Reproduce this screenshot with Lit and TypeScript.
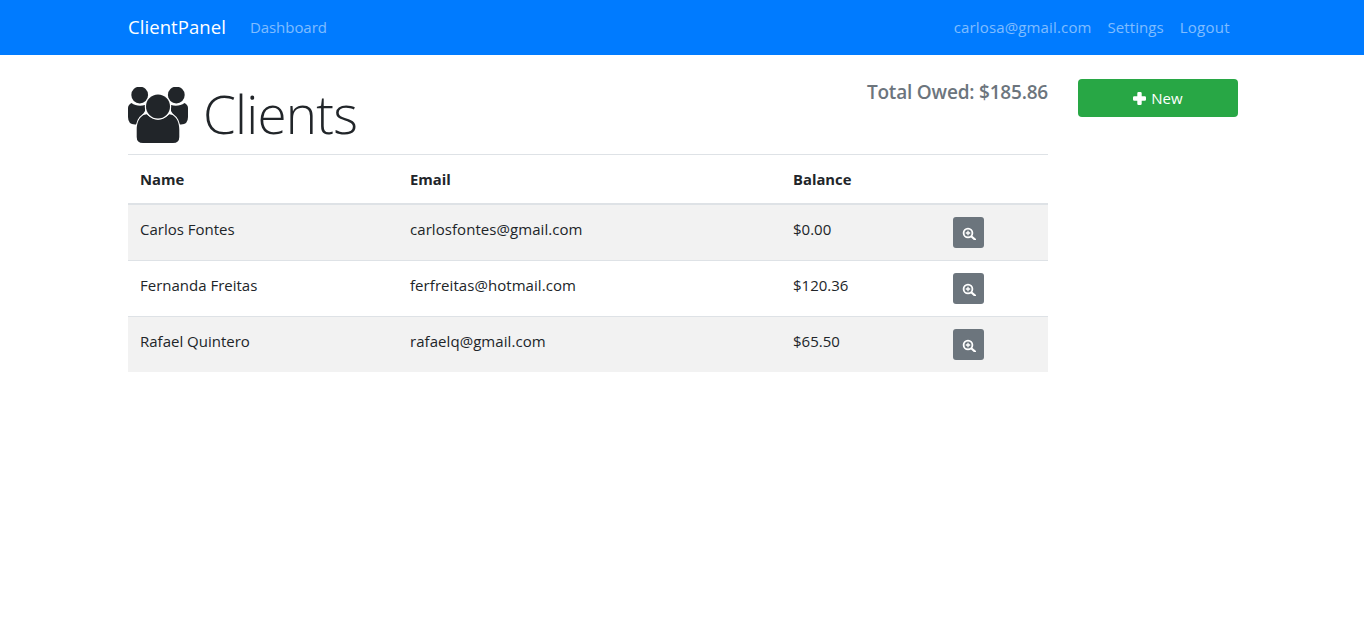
import { LitElement, html, css } from "lit";
import { customElement } from "lit/decorators.js";

const clients = [
  ["Carlos Fontes", "carlosfontes@gmail.com", "$0.00"],
  ["Fernanda Freitas", "ferfreitas@hotmail.com", "$120.36"],
  ["Rafael Quintero", "rafaelq@gmail.com", "$65.50"],
];

@customElement("app-root")
export class AppRoot extends LitElement {
  static styles = css`
    :host {
      display: block;
      font-family: "Open Sans", "Noto Sans", sans-serif;
      font-size: 15px;
      color: #212529;
      background: #fff;
      min-height: 633px;
    }
    nav {
      height: 53px;
      padding: 0 134px 2px 128px;
      background: #007bff;
      display: flex;
      align-items: center;
    }
    .brand { color: #fff; font-size: 18.5px; margin-right: 24px; letter-spacing: 0.07px; }
    .link { color: rgba(255,255,255,.5); font-size: 15px; }
    .dash { letter-spacing: -0.05px; }
    .mail { letter-spacing: 0.15px; }
    .set { letter-spacing: 0.05px; }
    .out { letter-spacing: 0.3px; }
    .spacer { flex: 1; }
    .right { display: flex; gap: 16px; }
    main {
      display: flex;
      padding: 24px 126px 0 128px;
      gap: 30px;
    }
    .col { width: 920px; }
    .side { width: 160px; }
    .head {
      display: flex;
      justify-content: space-between;
      height: 75px;
    }
    h1 {
      margin: 0;
      font-size: 53px;
      font-weight: 300;
      line-height: 72px;
      height: 72px;
      display: flex;
      align-items: flex-start;
      gap: 15px;
      letter-spacing: -0.8px;
    }
    h1 span { display: block; margin-top: -1px; }
    h1 svg { width: 60px; height: 56px; margin-top: 8px; }
    h5 {
      margin: 0;
      font-size: 19px;
      font-weight: 600;
      color: #6c757d;
      line-height: 26px;
      letter-spacing: -0.2px;
    }
    table { width: 920px; border-collapse: collapse; table-layout: fixed; }
    th {
      text-align: left;
      font-weight: 700;
      font-size: 14.8px;
      height: 49px;
      padding: 0 12px;
      border-top: 1px solid #dee2e6;
      border-bottom: 2px solid #dee2e6;
      box-sizing: border-box;
    }
    td {
      padding: 12px;
      border-top: 1px solid #dee2e6;
      font-size: 15px;
      line-height: 24px;
      vertical-align: top;
    }
    td.em { letter-spacing: 0.06px; }
    tbody tr:first-child td { border-top: 0; }
    tbody tr:nth-child(odd) { background: #f2f2f2; }
    .view {
      width: 31px;
      height: 31px;
      background: #6c757d;
      border-radius: 3px;
      display: flex;
      align-items: center;
      justify-content: center;
    }
    .view svg { width: 15px; height: 15px; }
    .new {
      height: 38px;
      background: #28a745;
      border-radius: 4px;
      color: #fff;
      display: flex;
      align-items: center;
      justify-content: center;
      gap: 5px;
      font-size: 15px;
    }
    .new svg { width: 13px; height: 13px; fill: #fff; }
    .ring { stroke: #fff; stroke-width: 2.4; stroke-linejoin: round; paint-order: stroke; }
  `;

  render() {
    return html`
      <nav>
        <span class="brand">ClientPanel</span>
        <span class="link dash">Dashboard</span>
        <span class="spacer"></span>
        <div class="right">
          <span class="link mail">carlosa@gmail.com</span>
          <span class="link set">Settings</span>
          <span class="link out">Logout</span>
        </div>
      </nav>
      <main>
        <div class="col">
          <div class="head">
            <h1>
              <svg viewBox="0 0 60 56" fill="#212529">
                <path d="M3.500 16C7 18.500 12 19.500 17 18V24C14 28 12 33 10.500 37.500H7Q0 37.500 0 30V21Q0 18 3.500 16Z" />
                <path d="M56.500 16C53 18.500 48 19.500 43 18V24C46 28 48 33 49.500 37.500H53Q60 37.500 60 30V21Q60 18 56.500 16Z" />
                <circle cx="11.700" cy="8" r="8.400" />
                <circle cx="48.300" cy="8" r="8.400" />
                <path class="ring" d="M8.700 43C8.700 35.500 11 31 15.500 28L18.700 27.300C22 30.500 26 32.500 30 32.500C34 32.500 38 30.500 41.300 27.300L44.500 28C49 31 51.300 35.500 51.300 43V50Q51.300 56 45 56H15Q8.700 56 8.700 50Z" />
                <circle class="ring" cx="30" cy="19.500" r="12" />
              </svg>
              <span>Clients</span>
            </h1>
            <h5>Total Owed: $185.86</h5>
          </div>
          <table>
            <colgroup>
              <col style="width:270px" /><col style="width:383px" /><col style="width:160px" /><col style="width:107px" />
            </colgroup>
            <thead><tr><th>Name</th><th>Email</th><th>Balance</th><th></th></tr></thead>
            <tbody>
              ${clients.map(
                (c) => html`<tr>
                  <td>${c[0]}</td><td class="em">${c[1]}</td><td>${c[2]}</td>
                  <td><div class="view">
                    <svg viewBox="0 0 15 15">
                      <circle cx="7" cy="8" r="4.400" fill="#6c757d" stroke="#fff" stroke-width="1.800" />
                      <path d="M10.500 11.500 14 14.500" stroke="#fff" stroke-width="2.300" stroke-linecap="round" />
                      <path d="M7 5.800v4.400M4.800 8h4.400" stroke="#fff" stroke-width="1.300" />
                    </svg>
                  </div></td>
                </tr>`
              )}
            </tbody>
          </table>
        </div>
        <div class="side">
          <div class="new">
            <svg viewBox="0 0 13 13"><path d="M4.300 1.200Q4.300 0 5.500 0H7.500Q8.700 0 8.700 1.200V4.300H11.800Q13 4.300 13 5.500V7.500Q13 8.700 11.800 8.700H8.700V11.800Q8.700 13 7.500 13H5.500Q4.300 13 4.300 11.800V8.700H1.200Q0 8.700 0 7.500V5.500Q0 4.300 1.200 4.300H4.300Z" /></svg>
            New
          </div>
        </div>
      </main>
    `;
  }
}
